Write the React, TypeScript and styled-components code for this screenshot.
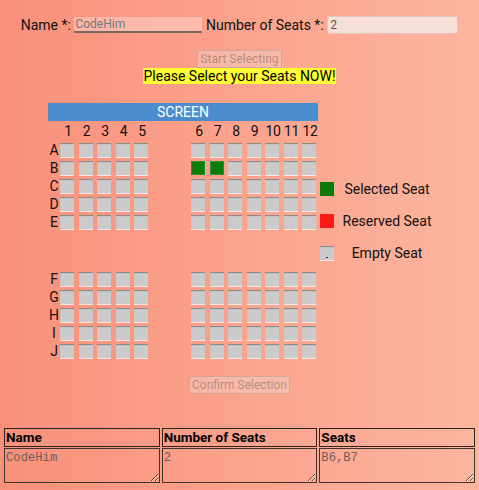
import React from 'react';
import styled, { createGlobalStyle } from 'styled-components';

// Seat layout data
const ROWS_FRONT = ['A', 'B', 'C', 'D', 'E'];
const ROWS_BACK = ['F', 'G', 'H', 'I', 'J'];
const COLUMNS = [1, 2, 3, 4, 5, 6, 7, 8, 9, 10, 11, 12];
const SELECTED = ['B6', 'B7'];

const GlobalStyle = createGlobalStyle`
  html, body {
    margin: 0;
    padding: 0;
  }
  body {
    min-height: 490px;
    font-family: Roboto, "Liberation Sans", sans-serif;
    font-size: 14px;
    color: #111111;
    background: linear-gradient(to right, #f8907a, #fdb59f);
  }
`;

const Page = styled.div`
  min-height: 490px;
  padding-top: 16px;
  box-sizing: border-box;
`;

const FormRow = styled.div`
  display: flex;
  justify-content: center;
  align-items: center;
  gap: 3.5px;
  height: 18px;
`;

const Label = styled.label`
  line-height: 18px;
  white-space: nowrap;
`;

const NameInput = styled.input`
  box-sizing: border-box;
  width: 128px;
  height: 16px;
  padding: 0 1px;
  border: none;
  border-bottom: 2px solid #7a6862;
  background: rgba(255, 255, 255, 0.3);
  font: 12px Roboto, "Liberation Sans", sans-serif;
  color: #777777;
  outline: none;
`;

const SeatCountInput = styled.input`
  box-sizing: border-box;
  width: 131px;
  height: 18px;
  padding: 0 2px;
  border: 1px solid #e2c4bc;
  border-radius: 2px;
  background: #f7ded7;
  font: 12px Roboto, "Liberation Sans", sans-serif;
  color: #555555;
  outline: none;
`;

const Centered = styled.div`
  display: flex;
  justify-content: center;
  margin-top: ${({ $top }: { $top: number }) => $top}px;
`;

const DisabledButton = styled.button`
  box-sizing: border-box;
  height: 18px;
  padding: 0 2px;
  border: 1px solid rgba(118, 118, 118, 0.3);
  border-radius: 2px;
  background: rgba(239, 239, 239, 0.3);
  color: rgba(16, 16, 16, 0.3);
  font: 12px Roboto, "Liberation Sans", sans-serif;
  line-height: 16px;
`;

const Notice = styled.div`
  text-align: center;
  line-height: 17px;
`;

const Highlight = styled.span`
  background: #ffff33;
  color: #000000;
`;

const SeatSection = styled.div`
  display: flex;
  align-items: flex-start;
  padding-left: 48px;
  margin-top: 17.5px;
`;

const SeatTable = styled.div`
  width: 270px;
  display: flex;
  flex-direction: column;
`;

const Screen = styled.div`
  height: 18.5px;
  line-height: 18.5px;
  background: #4a8ccc;
  color: #ffffff;
  text-align: center;
`;

const Row = styled.div<{ $h: number }>`
  display: flex;
  height: ${({ $h }) => $h}px;
`;

const RowLabel = styled.div`
  width: 12px;
  height: 14px;
  line-height: 14px;
  text-align: center;
  color: #111111;
`;

const Cell = styled.div<{ $aisle?: boolean; $last?: boolean }>`
  width: ${({ $last }) => ($last ? 16 : 18.5)}px;
  margin-left: ${({ $aisle }) => ($aisle ? 38.5 : 0)}px;
  flex: none;
`;

const ColNumber = styled.div`
  width: 16px;
  line-height: 21.5px;
  text-align: center;
  letter-spacing: -0.3px;
  color: #111111;
`;

const Seat = styled.span<{ $selected?: boolean }>`
  display: block;
  box-sizing: border-box;
  width: 14px;
  height: 14px;
  background: ${({ $selected }) => ($selected ? '#0b7c0b' : '#cbcbcb')};
  border: ${({ $selected }) => ($selected ? '1px solid #2b8d2b' : 'none')};
  box-shadow: ${({ $selected }) =>
    $selected
      ? 'none'
      : 'inset 0 2px 1px -1px rgba(0,0,0,0.35), inset 1px 0 1px -1px rgba(0,0,0,0.2), 0 1px 0 rgba(255,255,255,0.75)'};
`;

const VGap = styled.div`
  height: 39px;
`;

const Legend = styled.div`
  margin-left: 2px;
  padding-top: 79.5px;
  display: flex;
  flex-direction: column;
  gap: 18px;
`;

const LegendItem = styled.div`
  display: flex;
  align-items: center;
  height: 14px;
`;

const LegendBox = styled.span<{ $color: string }>`
  position: relative;
  display: block;
  box-sizing: border-box;
  width: 14px;
  height: 14px;
  background: ${({ $color }) => $color};
  box-shadow: ${({ $color }) =>
    $color === '#cbcbcb'
      ? 'inset 0 2px 1px -1px rgba(0,0,0,0.35), 0 1px 0 rgba(255,255,255,0.75)'
      : 'none'};
`;

const Dot = styled.span`
  position: absolute;
  left: 6px;
  bottom: 2px;
  width: 1.5px;
  height: 1.5px;
  background: #333333;
`;

const LegendText = styled.span`
  width: 106px;
  text-align: center;
  white-space: nowrap;
`;

const Summary = styled.div`
  display: grid;
  grid-template-columns: repeat(3, 1fr);
  column-gap: 2px;
  row-gap: 1.5px;
  margin: 34px 4px 0;
`;

const HeadCell = styled.div`
  box-sizing: border-box;
  height: 18.5px;
  line-height: 16px;
  padding: 0 1px;
  border: 1.5px solid #2c2420;
  font-weight: bold;
  font-size: 13.5px;
  color: #000000;
`;

const ValueBox = styled.textarea`
  box-sizing: border-box;
  display: block;
  width: 100%;
  height: 34.5px;
  margin: 0;
  padding: 2px 1px;
  border: 1.5px solid #3f3430;
  background: transparent;
  font: 12.2px "Liberation Mono", "DejaVu Sans Mono", monospace;
  color: #6e5e58;
  resize: both;
  outline: none;
`;

export default function App() {
  const renderSeatRow = (row: string) => (
    <Row key={row} $h={18}>
      <RowLabel>{row}</RowLabel>
      {COLUMNS.map((col) => (
        <Cell key={col} $aisle={col === 6} $last={col === 12}>
          <Seat $selected={SELECTED.includes(`${row}${col}`)} />
        </Cell>
      ))}
    </Row>
  );

  return (
    <Page>
      <GlobalStyle />
      <FormRow>
        <Label>Name *:</Label>
        <NameInput type="text" defaultValue="CodeHim" />
        <Label>Number of Seats *:</Label>
        <SeatCountInput type="number" defaultValue="2" />
      </FormRow>

      <Centered $top={16}>
        <DisabledButton disabled>Start Selecting</DisabledButton>
      </Centered>
      <Notice>
        <Highlight>Please Select your Seats NOW!</Highlight>
      </Notice>

      <SeatSection>
        <SeatTable>
          <Screen>SCREEN</Screen>
          <Row $h={21.5}>
            <RowLabel />
            {COLUMNS.map((col) => (
              <Cell key={col} $aisle={col === 6} $last={col === 12}>
                <ColNumber>{col}</ColNumber>
              </Cell>
            ))}
          </Row>
          {ROWS_FRONT.map(renderSeatRow)}
          <VGap />
          {ROWS_BACK.map(renderSeatRow)}
        </SeatTable>

        <Legend>
          <LegendItem>
            <LegendBox $color="#0b7c0b" />
            <LegendText>Selected Seat</LegendText>
          </LegendItem>
          <LegendItem>
            <LegendBox $color="#ff1a1a" />
            <LegendText>Reserved Seat</LegendText>
          </LegendItem>
          <LegendItem>
            <LegendBox $color="#cbcbcb">
              <Dot />
            </LegendBox>
            <LegendText>Empty Seat</LegendText>
          </LegendItem>
        </Legend>
      </SeatSection>

      <Centered $top={14.5}>
        <DisabledButton disabled>Confirm Selection</DisabledButton>
      </Centered>

      <Summary>
        <HeadCell>Name</HeadCell>
        <HeadCell>Number of Seats</HeadCell>
        <HeadCell>Seats</HeadCell>
        <ValueBox readOnly defaultValue="CodeHim" />
        <ValueBox readOnly defaultValue="2" />
        <ValueBox readOnly defaultValue="B6,B7" />
      </Summary>
    </Page>
  );
}
